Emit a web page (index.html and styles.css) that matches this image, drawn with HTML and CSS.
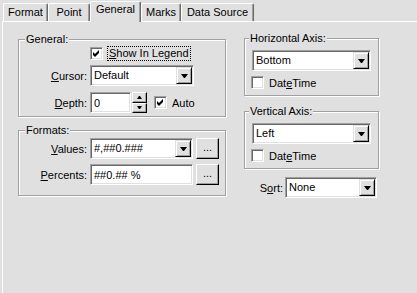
FILE: index.html
```html
<!DOCTYPE html>
<html lang="en">
  <head>
    <meta charset="UTF-8" />
    <title>Series Editor - General</title>
    <link rel="stylesheet" href="styles.css">
  </head>
  <body>
    <div class="tabs">
      <div class="tab w-format">Format</div>
      <div class="tab w-point">Point</div>
      <div class="tab active w-general">General</div>
      <div class="tab w-marks">Marks</div>
      <div class="tab w-source">Data Source</div>
    </div>

    <div class="page">
      <!-- Left column -->
      <div class="col-left">
        <div class="group general">
          <div class="group-title">General:</div>
          <div class="row check-row">
            <span class="check"><svg width="7" height="7" viewBox="0 0 7 7"><polygon points="0,2 2,4 6,0 6,3 2,7 0,5" fill="#000"/></svg></span>
            <span class="focus"><u>S</u>how In Legend</span>
          </div>
          <div class="row field-row">
            <span class="lbl"><u>C</u>ursor:</span>
            <div class="combo w-cursor"><span class="combo-text">Default</span><span class="drop"><i class="arrow-down"></i></span></div>
          </div>
          <div class="row field-row depth-row">
            <span class="lbl"><u>D</u>epth:</span>
            <div class="edit w-depth">0</div>
            <div class="spin">
              <span class="spin-btn"><i class="arrow-up-sm"></i></span>
              <span class="spin-btn"><i class="arrow-down-sm"></i></span>
            </div>
            <span class="check auto-check"><svg width="7" height="7" viewBox="0 0 7 7"><polygon points="0,2 2,4 6,0 6,3 2,7 0,5" fill="#000"/></svg></span>
            <span class="check-label">Auto</span>
          </div>
        </div>

        <div class="group formats">
          <div class="group-title">Formats:</div>
          <div class="row field-row values-row">
            <span class="lbl"><u>V</u>alues:</span>
            <div class="combo w-format-box"><span class="combo-text">#,##0.###</span><span class="drop"><i class="arrow-down"></i></span></div>
            <span class="btn">...</span>
          </div>
          <div class="row field-row percents-row">
            <span class="lbl"><u>P</u>ercents:</span>
            <div class="edit w-format-box">##0.## %</div>
            <span class="btn">...</span>
          </div>
        </div>
      </div>

      <!-- Right column -->
      <div class="col-right">
        <div class="group axis">
          <div class="group-title">Horizontal Axis:</div>
          <div class="combo w-axis"><span class="combo-text">Bottom</span><span class="drop"><i class="arrow-down"></i></span></div>
          <div class="row axis-check">
            <span class="check"></span>
            <span class="check-label">Dat<u>e</u>Time</span>
          </div>
        </div>

        <div class="group axis vertical">
          <div class="group-title">Vertical Axis:</div>
          <div class="combo w-axis"><span class="combo-text">Left</span><span class="drop"><i class="arrow-down"></i></span></div>
          <div class="row axis-check">
            <span class="check"></span>
            <span class="check-label">Dat<u>e</u>Time</span>
          </div>
        </div>

        <div class="row sort-row">
          <span class="sort-lbl">S<u>o</u>rt:</span>
          <div class="combo w-sort"><span class="combo-text">None</span><span class="drop"><i class="arrow-down"></i></span></div>
        </div>
      </div>
    </div>
  </body>
</html>
```

FILE: styles.css
```css
/* Base */
body {
  margin: 0;
  height: 293px;
  overflow: hidden;
  display: flex;
  flex-direction: column;
  background: #e0e0e0;
  color: #000;
  font-family: "Liberation Sans", Arial, sans-serif;
  font-size: 11px;
}

u {
  text-decoration: underline;
  text-underline-offset: 1px;
}

/* Tab strip */
.tabs {
  display: flex;
  align-items: flex-end;
  height: 21px;
  padding-left: 3px;
}

.tab {
  box-sizing: border-box;
  height: 18px;
  line-height: 16px;
  text-align: center;
  background: #e0e0e0;
  border-top: 1px solid #fff;
  border-left: 1px solid #fff;
  border-right: 1px solid #696969;
  box-shadow: inset -1px 0 0 #a0a0a0;
  border-radius: 2px 2px 0 0;
}

.tab.active {
  position: relative;
  z-index: 1;
  height: 21px;
  margin-bottom: -1px;
  line-height: 14px;
}

.w-format { width: 45px; }
.w-point { width: 42px; }
.w-general { width: 51px; }
.w-marks { width: 40px; }
.w-source { width: 73px; }

/* Page */
.page {
  flex: 1;
  display: flex;
  align-items: flex-start;
  margin-left: 2px;
  padding-left: 15px;
  border-top: 1px solid #fff;
  border-left: 1px solid #fff;
}

.col-left {
  width: 209px;
}

.col-right {
  margin-left: 17px;
}

/* Group boxes */
.group {
  box-sizing: border-box;
  border: 1px solid #a0a0a0;
  box-shadow: 1px 1px 0 #fff, inset 1px 1px 0 #fff;
}

.group-title {
  display: table;
  margin: -7px 0 0 6px;
  padding: 0 1px;
  line-height: 13px;
  background: #e0e0e0;
}

.general {
  width: 208px;
  height: 78px;
  margin-top: 17px;
}

.formats {
  width: 208px;
  height: 66px;
  margin-top: 13px;
}

.axis {
  width: 135px;
  height: 58px;
  margin-top: 16px;
}

.axis .group-title {
  margin-left: 4px;
}

.vertical {
  margin-top: 15px;
}

/* Rows */
.row {
  display: flex;
  align-items: center;
}

.check-row {
  height: 15px;
  margin-left: 71px;
}

.field-row {
  height: 21px;
  margin-top: 4px;
}

.depth-row {
  margin-top: 6px;
}

.values-row {
  margin-top: 1px;
}

.percents-row {
  margin-top: 5px;
}

.lbl {
  width: 68px;
  margin-right: 3px;
  text-align: right;
}

/* Sunken controls */
.combo,
.edit {
  box-sizing: border-box;
  height: 21px;
  padding: 1px;
  display: flex;
  align-items: center;
  background: #fff;
  border: 1px solid;
  border-color: #a0a0a0 #fff #fff #a0a0a0;
  box-shadow: inset 1px 1px 0 #696969, inset -1px -1px 0 #e0e0e0;
}

.combo {
  align-items: stretch;
}

.combo-text {
  flex: 1;
  padding-left: 2px;
  line-height: 17px;
}

.edit {
  padding-left: 3px;
}

.drop {
  box-sizing: border-box;
  width: 16px;
  display: flex;
  align-items: center;
  justify-content: center;
  background: #e0e0e0;
  border: 1px solid;
  border-color: #e0e0e0 #000 #000 #e0e0e0;
  box-shadow: inset 1px 1px 0 #fff, inset -1px -1px 0 #a0a0a0;
}

.arrow-down {
  width: 1px;
  height: 0;
  border-top: 4px solid #000;
  border-left: 3px solid transparent;
  border-right: 3px solid transparent;
}

.arrow-up-sm {
  width: 1px;
  height: 0;
  border-bottom: 3px solid #000;
  border-left: 2px solid transparent;
  border-right: 2px solid transparent;
}

.arrow-down-sm {
  width: 1px;
  height: 0;
  border-top: 3px solid #000;
  border-left: 2px solid transparent;
  border-right: 2px solid transparent;
}

.w-cursor { width: 104px; }
.w-depth { width: 41px; }
.w-format-box { width: 103px; }
.w-axis { width: 119px; margin: 5px 0 0 7px; }
.w-sort { width: 92px; }

/* Spinner */
.spin {
  width: 15px;
  height: 21px;
  margin-left: 1px;
  display: flex;
  flex-direction: column;
}

.spin-btn {
  box-sizing: border-box;
  flex: 1;
  display: flex;
  align-items: center;
  justify-content: center;
  background: #e0e0e0;
  border: 1px solid;
  border-color: #fff #000 #000 #fff;
  box-shadow: inset -1px -1px 0 #a0a0a0;
}

/* Buttons */
.btn {
  box-sizing: border-box;
  width: 23px;
  height: 21px;
  margin-left: 3px;
  text-align: center;
  line-height: 17px;
  background: #e0e0e0;
  border: 1px solid;
  border-color: #fff #000 #000 #fff;
  box-shadow: inset -1px -1px 0 #a0a0a0;
}

/* Check boxes */
.check {
  box-sizing: border-box;
  width: 13px;
  height: 13px;
  display: flex;
  align-items: center;
  justify-content: center;
  background: #fff;
  border: 1px solid;
  border-color: #a0a0a0 #fff #fff #a0a0a0;
  box-shadow: inset 1px 1px 0 #696969, inset -1px -1px 0 #e0e0e0;
}

.focus {
  margin-left: 4px;
  padding: 0 1px;
  line-height: 13px;
  border: 1px dotted #000;
}

.auto-check {
  margin-left: 7px;
}

.check-label {
  margin-left: 5px;
}

.axis-check {
  margin: 5px 0 0 6px;
}

/* Sort */
.sort-row {
  margin: 8px 0 0 15px;
}

.sort-lbl {
  width: 24px;
  margin-right: 2px;
  text-align: right;
}
```
